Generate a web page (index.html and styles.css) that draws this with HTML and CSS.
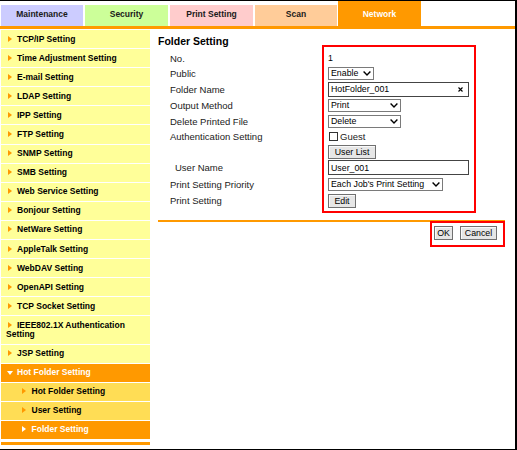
FILE: index.html
```html
<!DOCTYPE html>
<html lang="en">

<head>
  <meta charset="UTF-8" />
  <meta name="viewport" content="width=device-width, initial-scale=1.0" />
  <title>Folder Setting</title>
  <link rel="stylesheet" href="styles.css">
</head>

<body>
  <div class="frame">
    <!-- top tabs -->
    <div class="tabs">
      <div class="tab maint">Maintenance</div>
      <div class="tab security">Security</div>
      <div class="tab print">Print Setting</div>
      <div class="tab scan">Scan</div>
      <div class="tab on">Network</div>
    </div>
    <div class="tabline"></div>

    <div class="body">
      <!-- side menu -->
      <div class="nav">
        <ul class="side">
          <li><span class="arr"></span>TCP/IP Setting</li>
          <li><span class="arr"></span>Time Adjustment Setting</li>
          <li><span class="arr"></span>E-mail Setting</li>
          <li><span class="arr"></span>LDAP Setting</li>
          <li><span class="arr"></span>IPP Setting</li>
          <li><span class="arr"></span>FTP Setting</li>
          <li><span class="arr"></span>SNMP Setting</li>
          <li><span class="arr"></span>SMB Setting</li>
          <li><span class="arr"></span>Web Service Setting</li>
          <li><span class="arr"></span>Bonjour Setting</li>
          <li><span class="arr"></span>NetWare Setting</li>
          <li><span class="arr"></span>AppleTalk Setting</li>
          <li><span class="arr"></span>WebDAV Setting</li>
          <li><span class="arr"></span>OpenAPI Setting</li>
          <li><span class="arr"></span>TCP Socket Setting</li>
          <li><span class="arr"></span>IEEE802.1X Authentication Setting</li>
          <li><span class="arr"></span>JSP Setting</li>
          <li class="open"><span class="arr down"></span>Hot Folder Setting</li>
          <li class="sub"><span class="arr"></span>Hot Folder Setting</li>
          <li class="sub"><span class="arr"></span>User Setting</li>
          <li class="sub cur"><span class="arr"></span>Folder Setting</li>
        </ul>
        <div class="side-end"></div>
      </div>

      <!-- folder form -->
      <div class="main">
        <h2>Folder Setting</h2>
        <div class="form">
          <div class="lbl">No.</div>
          <div class="ctl">1</div>

          <div class="lbl">Public</div>
          <div class="ctl">
            <span class="sel">
              <select class="w46"><option>Enable</option></select>
              <svg width="8" height="5" viewBox="0 0 8 5"><polyline points="0.6,0.6 4,4 7.4,0.6" fill="none" stroke="#000" stroke-width="1.4" /></svg>
            </span>
          </div>

          <div class="lbl">Folder Name</div>
          <div class="ctl">
            <span class="txtwrap">
              <input class="txt" type="text" value="HotFolder_001" />
              <svg class="clear" width="5" height="5" viewBox="0 0 5 5"><path d="M0.5 0.5L4.5 4.5M4.5 0.5L0.5 4.5" stroke="#000" stroke-width="1.1" /></svg>
            </span>
          </div>

          <div class="lbl">Output Method</div>
          <div class="ctl">
            <span class="sel">
              <select class="w73"><option>Print</option></select>
              <svg width="8" height="5" viewBox="0 0 8 5"><polyline points="0.6,0.6 4,4 7.4,0.6" fill="none" stroke="#000" stroke-width="1.4" /></svg>
            </span>
          </div>

          <div class="lbl">Delete Printed File</div>
          <div class="ctl">
            <span class="sel">
              <select class="w73"><option>Delete</option></select>
              <svg width="8" height="5" viewBox="0 0 8 5"><polyline points="0.6,0.6 4,4 7.4,0.6" fill="none" stroke="#000" stroke-width="1.4" /></svg>
            </span>
          </div>

          <div class="lbl">Authentication Setting</div>
          <div class="ctl"><input class="chk" type="checkbox" /><span class="chk-text">Guest</span></div>

          <div class="lbl"></div>
          <div class="ctl"><button class="btn b-list">User List</button></div>

          <div class="lbl indent">User Name</div>
          <div class="ctl"><input class="txt" type="text" value="User_001" /></div>

          <div class="lbl">Print Setting Priority</div>
          <div class="ctl">
            <span class="sel">
              <select class="w115"><option>Each Job's Print Setting</option></select>
              <svg width="8" height="5" viewBox="0 0 8 5"><polyline points="0.6,0.6 4,4 7.4,0.6" fill="none" stroke="#000" stroke-width="1.4" /></svg>
            </span>
          </div>

          <div class="lbl">Print Setting</div>
          <div class="ctl"><button class="btn b-edit">Edit</button></div>

          <div class="mark form-mark"></div>
        </div>

        <div class="rule"></div>

        <div class="actions">
          <button class="btn b-ok">OK</button>
          <button class="btn b-cancel">Cancel</button>
          <div class="mark act-mark"></div>
        </div>
      </div>
    </div>
  </div>
</body>

</html>
```

FILE: styles.css
```css
* {
  margin: 0;
  padding: 0;
  box-sizing: border-box;
}

body {
  font-family: "Liberation Sans", Arial, sans-serif;
  background: #fff;
  color: #000;
}

.frame {
  width: 517px;
  height: 450px;
  border-top: 1px solid #000;
  border-right: 2px solid #000;
  border-bottom: 1px solid #000;
  overflow: hidden;
}

/* tabs */
.tabs {
  display: flex;
  align-items: flex-end;
  gap: 2px;
  height: 25px;
  padding-left: 1px;
}

.tab {
  width: 83px;
  height: 21px;
  padding-bottom: 2px;
  line-height: 19px;
  text-align: center;
  font-size: 8.5px;
  font-weight: bold;
  color: #1a1a1a;
}

.tab.maint {
  width: 82px;
  background: #ccccff;
}

.tab.security {
  background: #ccff99;
}

.tab.print {
  background: #ffcccc;
}

.tab.scan {
  width: 82px;
  background: #ffcc99;
}

.tab.on {
  height: 25px;
  padding-top: 4px;
  margin-left: -1px;
  background: #ff9900;
  color: #fff;
}

.tabline {
  height: 3px;
  margin-bottom: 1px;
  background: #ff9900;
}

.body {
  display: flex;
}

/* side menu */
.nav {
  width: 149px;
  margin-left: 1px;
}

.side {
  list-style: none;
}

.side li {
  padding: 4.55px 4px 4.55px 5px;
  border-bottom: 1px solid #fff;
  background: #ffff99;
  font-size: 8.5px;
  font-weight: bold;
  line-height: 9px;
}

.side .arr {
  display: inline-block;
  margin: 0 5.5px 0 1.5px;
  border-left: 4px solid #ff9900;
  border-top: 3px solid transparent;
  border-bottom: 3px solid transparent;
}

.side .arr.down {
  margin: 0 4px 0 1px;
  border-left: 3px solid transparent;
  border-right: 3px solid transparent;
  border-top: 4px solid #fff;
  border-bottom: 0;
}

.side li.sub {
  padding-left: 19.5px;
  background: #ffdd55;
}

.side li.open,
.side li.cur {
  background: #ff9900;
  color: #fff;
}

.side li.cur .arr {
  border-left-color: #fff;
}

.side-end {
  height: 3px;
  margin-top: 2px;
  background: #ff9900;
}

/* main */
.main {
  flex: 1;
  padding: 5px 10px 0 8px;
}

.main h2 {
  font-size: 10.5px;
  line-height: 12px;
  margin-bottom: 4px;
}

.form {
  position: relative;
  display: grid;
  grid-template-columns: 158px auto;
  grid-template-rows: 14px 16px 16px 16px 16px 15px 15px 17px 16px 17px;
  align-items: center;
  margin-left: 12px;
  font-size: 9.5px;
  color: #222;
}

.form .indent {
  padding-left: 5px;
}

.ctl {
  display: flex;
  align-items: center;
  font-size: 8.8px;
  color: #000;
}

.sel {
  position: relative;
  display: inline-block;
  height: 13px;
}

.sel select {
  -webkit-appearance: none;
  appearance: none;
  display: block;
  height: 13px;
  padding: 0 0 0 2px;
  border: 1px solid #7a7a7a;
  border-radius: 0;
  background: #fff;
  font: 8.8px "Liberation Sans", Arial, sans-serif;
  color: #000;
}

.sel svg {
  position: absolute;
  right: 3px;
  top: 4px;
}

.w46 {
  width: 46px;
}

.w73 {
  width: 73px;
}

.w115 {
  width: 115px;
}

.txtwrap {
  position: relative;
  display: inline-block;
}

.txt {
  display: block;
  width: 141px;
  height: 15px;
  padding: 0 2px;
  border: 1px solid #444;
  outline: none;
  font: 8.8px "Liberation Sans", Arial, sans-serif;
  color: #000;
}

.txtwrap .clear {
  position: absolute;
  right: 6px;
  top: 5px;
}

.chk {
  -webkit-appearance: none;
  appearance: none;
  width: 9px;
  height: 9px;
  margin: 0 2px 0 1px;
  border: 1px solid #333;
  background: #fff;
}

.chk-text {
  font-size: 9.5px;
  color: #222;
}

.btn {
  height: 14px;
  padding: 0;
  border: 1px solid #707070;
  background: #e6e6e6;
  box-shadow: inset 1px 1px 0 #fafafa;
  font: 8.8px "Liberation Sans", Arial, sans-serif;
  color: #000;
}

.b-list {
  width: 48px;
}

.b-edit {
  width: 28px;
}

.b-ok {
  width: 19px;
}

.b-cancel {
  width: 37px;
}

.rule {
  height: 2px;
  margin-top: 11px;
  background: #ff9900;
}

.actions {
  position: relative;
  display: flex;
  justify-content: flex-end;
  gap: 7px;
  margin-top: 4px;
  padding-right: 8px;
}

/* red highlight frames */
.mark {
  position: absolute;
  border: 2px solid #ff0000;
  pointer-events: none;
}

.form-mark {
  left: 152px;
  top: -6px;
  width: 154px;
  height: 168px;
}

.act-mark {
  right: 0;
  top: -5px;
  width: 75px;
  height: 26px;
}
```
